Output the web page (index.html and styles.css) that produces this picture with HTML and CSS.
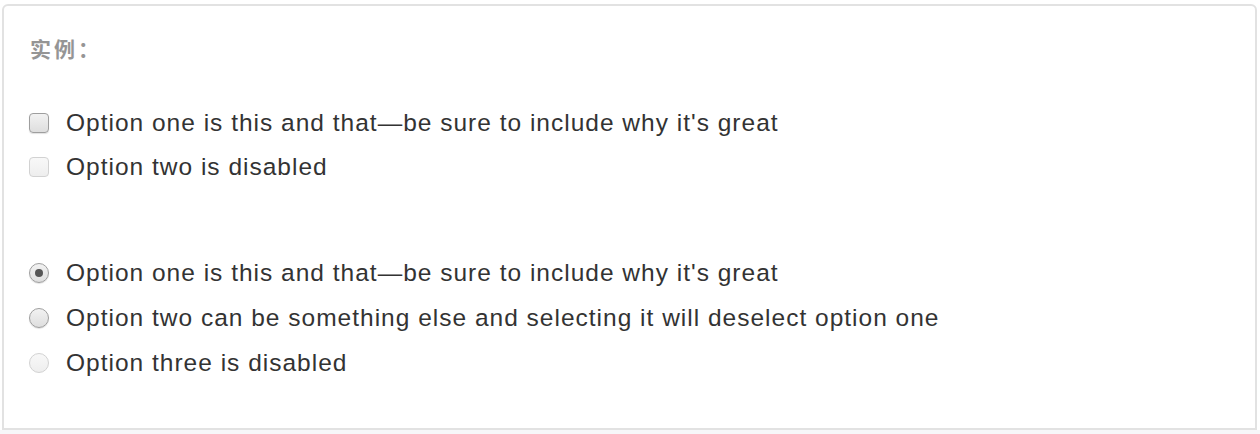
FILE: index.html
```html
<!DOCTYPE html>
<html lang="zh">
<head>
<meta charset="utf-8">
<title>实例</title>
<link rel="stylesheet" href="styles.css">
</head>
<body>
<div class="example">
  <div class="example-label">实例：</div>
  <div class="group group-checks">
    <label class="opt"><input type="checkbox" class="box"><span>Option one is this and that—be sure to include why it's great</span></label>
    <label class="opt"><input type="checkbox" class="box" disabled><span>Option two is disabled</span></label>
  </div>
  <div class="group group-radios">
    <label class="opt"><input type="radio" name="r" class="round" checked><span>Option one is this and that—be sure to include why it's great</span></label>
    <label class="opt"><input type="radio" name="r" class="round"><span>Option two can be something else and selecting it will deselect option one</span></label>
    <label class="opt"><input type="radio" name="r" class="round" disabled><span>Option three is disabled</span></label>
  </div>
</div>
<div class="highlight"></div>
</body>
</html>
```

FILE: styles.css
```css
html, body {
  margin: 0;
  padding: 0;
  background: #fff;
}

body {
  font-family: "Liberation Sans", Arial, "Noto Sans CJK SC", sans-serif;
  color: #333;
}

.example {
  box-sizing: border-box;
  height: 426px;
  margin: 4px 3px 0 2px;
  border: 2px solid #e2e2e2;
  border-radius: 6px 6px 0 0;
  padding: 32px 0 0 25px;
  display: flex;
  flex-direction: column;
}

.example-label {
  font-family: "Liberation Sans", "Noto Sans CJK SC", sans-serif;
  font-size: 21px;
  line-height: 24px;
  font-weight: bold;
  color: #959595;
  letter-spacing: 3px;
  padding-left: 1px;
}

.group {
  display: flex;
  flex-direction: column;
}

.group-checks {
  margin-top: 43px;
  gap: 8px;
}

.group-radios {
  margin-top: 70px;
  gap: 9px;
}

.opt {
  display: flex;
  align-items: center;
  gap: 17px;
  height: 36px;
  font-size: 24.5px;
  letter-spacing: 1px;
  color: #333;
}

.box,
.round {
  -webkit-appearance: none;
  appearance: none;
  margin: 0;
  width: 20px;
  height: 20px;
  box-sizing: border-box;
  flex: none;
  border: 1px solid #9e9e9e;
  background: linear-gradient(#f2f2f2, #dedede);
  box-shadow: 0 1px 1px rgba(0, 0, 0, 0.12);
}

.box {
  border-radius: 4px;
}

.round {
  border-radius: 50%;
  position: relative;
}

.round:checked::after {
  content: "";
  position: absolute;
  left: 50%;
  top: 50%;
  width: 8px;
  height: 8px;
  margin: -4px 0 0 -4px;
  border-radius: 50%;
  background: #555;
}

.box:disabled,
.round:disabled {
  border-color: #d2d2d2;
  background: linear-gradient(#f8f8f8, #eeeeee);
  box-shadow: none;
}

.highlight {
  height: 20px;
  background: #f7f7f9;
}
```
